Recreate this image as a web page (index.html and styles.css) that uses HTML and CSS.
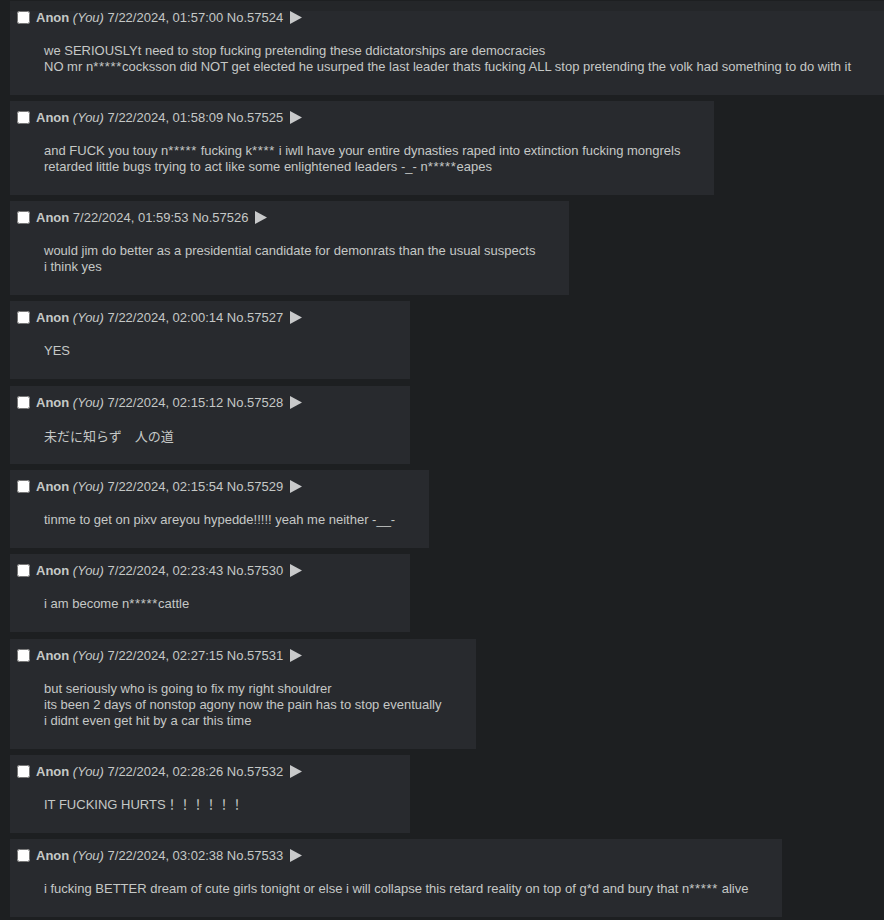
FILE: index.html
```html
<!DOCTYPE html>
<html lang="en">
<head>
<meta charset="utf-8">
<title>Thread</title>
<link rel="stylesheet" href="styles.css">
</head>
<body>
<div class="thread">

  <div class="post post-first">
    <div class="head"><input type="checkbox" class="chk"><span class="name">Anon</span> <span class="you">(You)</span> <span class="date">7/22/2024, 01:57:00</span> <span class="num">No.57524</span> <svg class="arrow" width="12" height="13" viewBox="0 0 12 13"><polygon points="0,0 12,6.5 0,13"/></svg></div>
    <div class="msg">we SERIOUSLYt need to stop fucking pretending these ddictatorships are democracies<br>NO mr n<span class="redact">*****</span>cocksson did NOT get elected he usurped the last leader thats fucking ALL stop pretending the volk had something to do with it</div>
  </div>

  <div class="post">
    <div class="head"><input type="checkbox" class="chk"><span class="name">Anon</span> <span class="you">(You)</span> <span class="date">7/22/2024, 01:58:09</span> <span class="num">No.57525</span> <svg class="arrow" width="12" height="13" viewBox="0 0 12 13"><polygon points="0,0 12,6.5 0,13"/></svg></div>
    <div class="msg">and FUCK you touy n<span class="redact">*****</span> fucking k<span class="redact">****</span> i iwll have your entire dynasties raped into extinction fucking mongrels<br>retarded little bugs trying to act like some enlightened leaders -_- n<span class="redact">*****</span>eapes</div>
  </div>

  <div class="post">
    <div class="head"><input type="checkbox" class="chk"><span class="name">Anon</span> <span class="date">7/22/2024, 01:59:53</span> <span class="num">No.57526</span> <svg class="arrow" width="12" height="13" viewBox="0 0 12 13"><polygon points="0,0 12,6.5 0,13"/></svg></div>
    <div class="msg">would jim do better as a presidential candidate for demonrats than the usual suspects<br>i think yes</div>
  </div>

  <div class="post">
    <div class="head"><input type="checkbox" class="chk"><span class="name">Anon</span> <span class="you">(You)</span> <span class="date">7/22/2024, 02:00:14</span> <span class="num">No.57527</span> <svg class="arrow" width="12" height="13" viewBox="0 0 12 13"><polygon points="0,0 12,6.5 0,13"/></svg></div>
    <div class="msg">YES</div>
  </div>

  <div class="post">
    <div class="head"><input type="checkbox" class="chk"><span class="name">Anon</span> <span class="you">(You)</span> <span class="date">7/22/2024, 02:15:12</span> <span class="num">No.57528</span> <svg class="arrow" width="12" height="13" viewBox="0 0 12 13"><polygon points="0,0 12,6.5 0,13"/></svg></div>
    <div class="msg cjk">未だに知らず　人の道</div>
  </div>

  <div class="post">
    <div class="head"><input type="checkbox" class="chk"><span class="name">Anon</span> <span class="you">(You)</span> <span class="date">7/22/2024, 02:15:54</span> <span class="num">No.57529</span> <svg class="arrow" width="12" height="13" viewBox="0 0 12 13"><polygon points="0,0 12,6.5 0,13"/></svg></div>
    <div class="msg">tinme to get on pixv areyou hypedde!!!!! yeah me neither -__-</div>
  </div>

  <div class="post">
    <div class="head"><input type="checkbox" class="chk"><span class="name">Anon</span> <span class="you">(You)</span> <span class="date">7/22/2024, 02:23:43</span> <span class="num">No.57530</span> <svg class="arrow" width="12" height="13" viewBox="0 0 12 13"><polygon points="0,0 12,6.5 0,13"/></svg></div>
    <div class="msg">i am become n<span class="redact">*****</span>cattle</div>
  </div>

  <div class="post">
    <div class="head"><input type="checkbox" class="chk"><span class="name">Anon</span> <span class="you">(You)</span> <span class="date">7/22/2024, 02:27:15</span> <span class="num">No.57531</span> <svg class="arrow" width="12" height="13" viewBox="0 0 12 13"><polygon points="0,0 12,6.5 0,13"/></svg></div>
    <div class="msg">but seriously who is going to fix my right shouldrer<br>its been 2 days of nonstop agony now the pain has to stop eventually<br>i didnt even get hit by a car this time</div>
  </div>

  <div class="post">
    <div class="head"><input type="checkbox" class="chk"><span class="name">Anon</span> <span class="you">(You)</span> <span class="date">7/22/2024, 02:28:26</span> <span class="num">No.57532</span> <svg class="arrow" width="12" height="13" viewBox="0 0 12 13"><polygon points="0,0 12,6.5 0,13"/></svg></div>
    <div class="msg">IT FUCKING HURTS！！！！！！</div>
  </div>

  <div class="post">
    <div class="head"><input type="checkbox" class="chk"><span class="name">Anon</span> <span class="you">(You)</span> <span class="date">7/22/2024, 03:02:38</span> <span class="num">No.57533</span> <svg class="arrow" width="12" height="13" viewBox="0 0 12 13"><polygon points="0,0 12,6.5 0,13"/></svg></div>
    <div class="msg">i fucking BETTER dream of cute girls tonight or else i will collapse this retard reality on top of g*d and bury that n<span class="redact">*****</span> alive</div>
  </div>

</div>
</body>
</html>
```

FILE: styles.css
```css
html, body {
  margin: 0;
  background: #1d1f21;
  overflow: hidden;
}

body {
  padding-top: 0.5px;
  font-family: "Liberation Sans", Arial, "Noto Sans CJK JP", sans-serif;
  font-size: 13px;
  color: #c5c8c6;
}

.thread {
  display: flex;
  flex-direction: column;
  align-items: flex-start;
  padding-left: 10px;
}

.post {
  box-sizing: border-box;
  min-width: 400px;
  padding: 9px 0 20px;
  margin-bottom: 6.3px;
  background: #282a2e;
}

.post-first {
  background: linear-gradient(#242629 0 10px, #282a2e 10px);
}

.head {
  height: 16px;
  line-height: 16px;
  padding-left: 7px;
  white-space: nowrap;
}

.chk {
  width: 13px;
  height: 13px;
  margin: 0 6px 0 0;
  vertical-align: -2px;
}

.name {
  font-weight: bold;
  color: #c5c8c6;
}

.you {
  font-style: italic;
}

.arrow {
  margin-left: 3px;
  vertical-align: -2px;
  fill: #c8c9ca;
}

.msg {
  margin: 17px 34px 0;
  line-height: 16px;
  white-space: nowrap;
}

.cjk {
  font-family: "Noto Sans CJK JP", sans-serif;
}

.redact {
  letter-spacing: 0.7px;
}
```
